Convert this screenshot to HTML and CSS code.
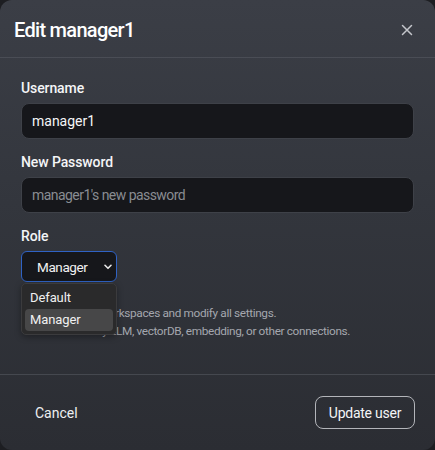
FILE: index.html
```html
<!DOCTYPE html>
<html lang="en">
<head>
<meta charset="utf-8">
<title>Edit manager1</title>
<link rel="stylesheet" href="styles.css">
</head>
<body>
<div class="modal">
  <div class="modal-header">
    <h1 class="title">Edit manager1</h1>
    <button class="close" aria-label="Close">
      <svg width="12" height="12" viewBox="0 0 12 12"><path d="M1.5 1.5L10.5 10.5M10.5 1.5L1.5 10.5" stroke="#c4c6cb" stroke-width="1.5" stroke-linecap="round"/></svg>
    </button>
  </div>
  <div class="modal-body">
    <div class="field">
      <label class="label">Username</label>
      <div class="input">manager1</div>
    </div>
    <div class="field">
      <label class="label">New Password</label>
      <div class="input placeholder">manager1's new password</div>
    </div>
    <div class="field">
      <label class="label">Role</label>
      <div class="select-wrap">
        <div class="select">
          <span class="select-value">Manager</span>
          <svg class="chev" width="8" height="6" viewBox="0 0 8 6"><path d="M1 1.3L4 4.3L7 1.3" fill="none" stroke="#e8e8e8" stroke-width="1.6" stroke-linecap="round" stroke-linejoin="round"/></svg>
        </div>
        <ul class="options">
          <li class="option">Default</li>
          <li class="option active">Manager</li>
        </ul>
      </div>
    </div>
    <ul class="desc">
      <li>Can manage workspaces and modify all settings.</li>
      <li>Cannot modify LLM, vectorDB, embedding, or other connections.</li>
    </ul>
  </div>
  <div class="modal-footer">
    <button class="btn-cancel">Cancel</button>
    <button class="btn-update">Update user</button>
  </div>
</div>
</body>
</html>
```
FILE: styles.css
```css
* { box-sizing: border-box; }
html, body { margin: 0; padding: 0; }
body {
  background: #1d1e22;
  font-family: "Roboto", "Liberation Sans", sans-serif;
  color: #f2f3f5;
  width: 435px;
  height: 450px;
  overflow: hidden;
}
.modal {
  width: 435px;
  height: 450px;
  border-radius: 12px;
  background: linear-gradient(180deg, #3b3e46 0%, #33363d 45%, #2b2d33 100%);
  display: flex;
  flex-direction: column;
}
.modal-header {
  height: 58px;
  padding: 0 22px 0 14px;
  display: flex;
  align-items: center;
  justify-content: space-between;
  border-bottom: 1px solid #4a4d55;
}
.title {
  margin: 0;
  font-size: 20px;
  font-weight: 500;
  letter-spacing: -0.7px;
  color: #ffffff;
  padding-top: 2px;
}
.close {
  background: none;
  border: 0;
  padding: 0;
  width: 12px;
  height: 12px;
  display: flex;
  margin-top: 2px;
}
.modal-body {
  padding: 20px 21px 0 21px;
  display: flex;
  flex-direction: column;
  gap: 13px;
  height: 317px;
  border-bottom: 1px solid #45484f;
}
.field { display: flex; flex-direction: column; gap: 5px; }
.label {
  font-size: 14px;
  line-height: 20px;
  font-weight: 500;
  color: #f4f5f7;
  letter-spacing: -0.1px;
}
.input {
  height: 36px;
  border: 1px solid #3e4148;
  border-radius: 8px;
  background: #16171b;
  padding: 0 10px;
  display: flex;
  align-items: center;
  font-size: 14px;
  color: #f4f5f7;
}
.input.placeholder { color: #898c92; letter-spacing: -0.55px; }
.select-wrap { position: relative; width: 96px; }
.select {
  height: 31px;
  width: 96px;
  border: 1px solid #2f62c4;
  border-radius: 6px;
  background: #16171b;
  display: flex;
  align-items: center;
  padding: 0 4px 0 15px;
  justify-content: space-between;
  font-size: 13.5px;
  letter-spacing: -0.4px;
  color: #f2f2f2;
}
.select-value { padding-top: 1px; }
.options {
  position: absolute;
  top: 32px;
  left: 0;
  width: 96px;
  margin: 0;
  padding: 3px 3px;
  list-style: none;
  background: #2a2a2b;
  border: 1px solid #3b3b3d;
  border-radius: 5px;
  font-size: 13px;
  letter-spacing: -0.1px;
  color: #f0f0f0;
  box-shadow: 0 2px 6px rgba(0,0,0,0.35);
  z-index: 2;
}
.option {
  height: 22px;
  line-height: 22px;
  padding: 0 5px;
  border-radius: 4px;
}
.option.active { background: #474748; }
.desc {
  margin: 9px 0 0 0;
  padding: 0 0 0 14px;
  font-size: 11.8px;
  line-height: 18px;
  color: #a4a7ae;
  letter-spacing: -0.35px;
}
.desc li::marker { font-size: 9px; }
.modal-footer {
  flex: 1;
  display: flex;
  align-items: center;
  justify-content: space-between;
  padding: 0 20px 0 21px;
}
button { font-family: inherit; cursor: pointer; }
.btn-cancel {
  background: none;
  border: 0;
  color: #eef0f2;
  font-size: 14px;
  padding: 0 14px;
  height: 32px;
}
.btn-update {
  background: transparent;
  border: 1px solid #b3b5ba;
  border-radius: 8px;
  height: 33px;
  width: 100px;
  color: #f4f5f7;
  font-size: 14px;
  letter-spacing: -0.25px;
  padding: 0;
}
```
